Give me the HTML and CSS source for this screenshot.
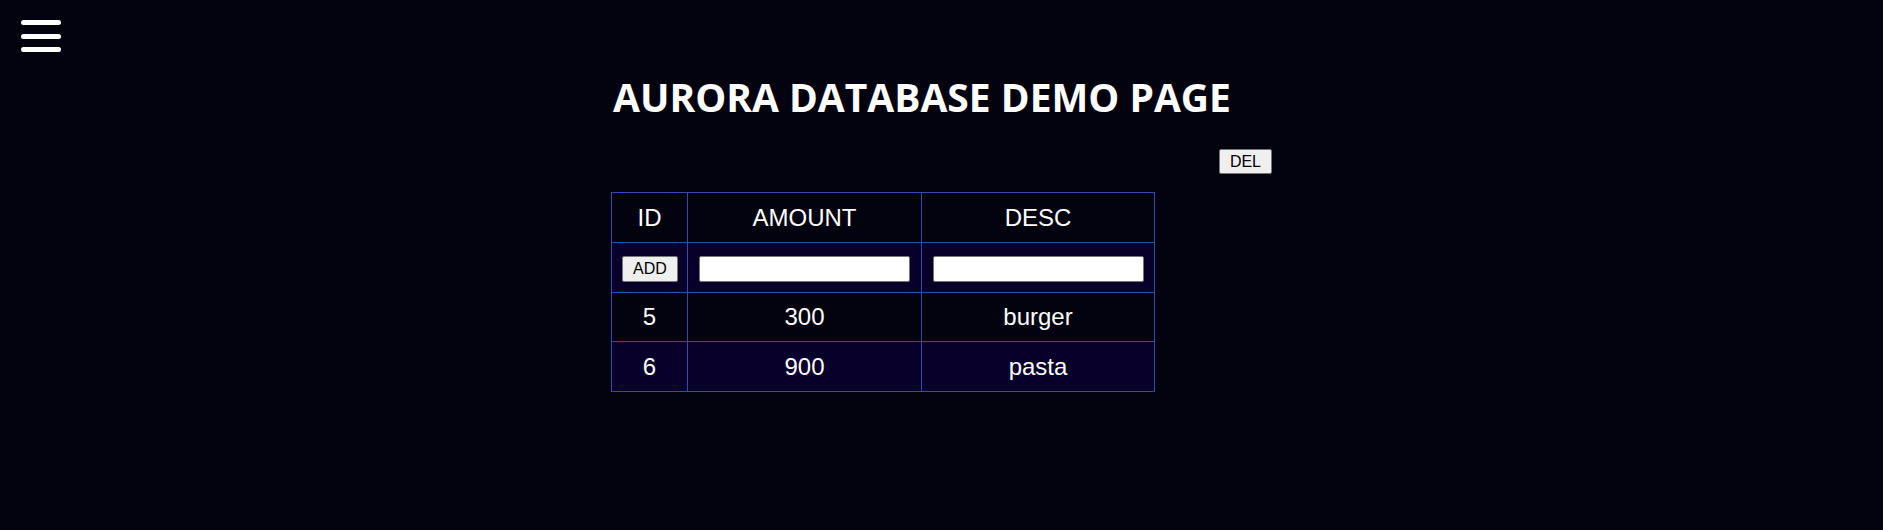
FILE: index.html
```html
<!DOCTYPE html>
<html lang="en">
<head>
<meta charset="utf-8">
<title>Aurora Database Demo Page</title>
<link rel="stylesheet" href="styles.css">
</head>
<body>
<button class="menu-toggle" aria-label="Menu">
  <span class="bar"></span>
  <span class="bar"></span>
  <span class="bar"></span>
</button>
<main class="page">
  <h1 class="title">AURORA DATABASE DEMO PAGE</h1>
  <div class="toolbar">
    <button class="btn">DEL</button>
  </div>
  <table class="data">
    <colgroup>
      <col class="c-id">
      <col class="c-amount">
      <col class="c-desc">
    </colgroup>
    <thead>
      <tr><th>ID</th><th>AMOUNT</th><th>DESC</th></tr>
    </thead>
    <tbody>
      <tr class="alt">
        <td><button class="btn">ADD</button></td>
        <td><input class="field" type="text"></td>
        <td><input class="field" type="text"></td>
      </tr>
      <tr class="short"><td>5</td><td>300</td><td>burger</td></tr>
      <tr class="alt"><td>6</td><td>900</td><td>pasta</td></tr>
    </tbody>
  </table>
</main>
</body>
</html>
```
FILE: styles.css
```css
html, body {
  margin: 0;
  padding: 0;
  background: #03030f;
  color: #ffffff;
  font-family: "Liberation Sans", Arial, sans-serif;
  height: 100%;
}

.menu-toggle {
  position: fixed;
  top: 20px;
  left: 21px;
  width: 40px;
  height: 32px;
  padding: 0;
  margin: 0;
  border: 0;
  background: transparent;
  display: flex;
  flex-direction: column;
  justify-content: space-between;
  cursor: pointer;
}

.menu-toggle .bar {
  display: block;
  width: 40px;
  height: 5px;
  border-radius: 3px;
  background: #ffffff;
}

.page {
  width: 661px;
  margin: 0 auto;
  padding-top: 70px;
}

.title {
  margin: 0 0 0 2px;
  font-family: "Open Sans", "Noto Sans", sans-serif;
  font-weight: 700;
  font-size: 39px;
  line-height: 53px;
  letter-spacing: 0;
  color: #ffffff;
  white-space: nowrap;
}

.toolbar {
  display: flex;
  justify-content: flex-end;
  margin-top: 26px;
}

.btn {
  font-family: "Liberation Sans", Arial, sans-serif;
  font-size: 16px;
  color: #000000;
  background: #efefef;
  border: 1px solid #767676;
  border-radius: 2px;
  height: 25px;
  padding: 0 10px;
  line-height: 23px;
}

.data {
  margin-top: 18px;
  border-collapse: collapse;
  width: 543px;
  table-layout: fixed;
  font-size: 24px;
}

.c-id { width: 76px; }
.c-amount { width: 234px; }
.c-desc { width: 233px; }

.data th,
.data td {
  border: 1px solid #2c4fae;
  height: 50px;
  padding: 0 10px;
  text-align: center;
  vertical-align: middle;
  font-weight: 400;
  box-sizing: border-box;
}

.data tr.short td {
  height: 49px;
}

.data tr.alt td {
  background: #08002a;
}

.data .btn {
  height: 26px;
  line-height: 24px;
  display: block;
  margin: 2px auto 0;
}

.field {
  display: block;
  width: 211px;
  height: 26px;
  box-sizing: border-box;
  margin: 2px auto 0;
  border: 1px solid #767676;
  border-radius: 2px;
  background: #ffffff;
  padding: 1px 2px;
}
```
